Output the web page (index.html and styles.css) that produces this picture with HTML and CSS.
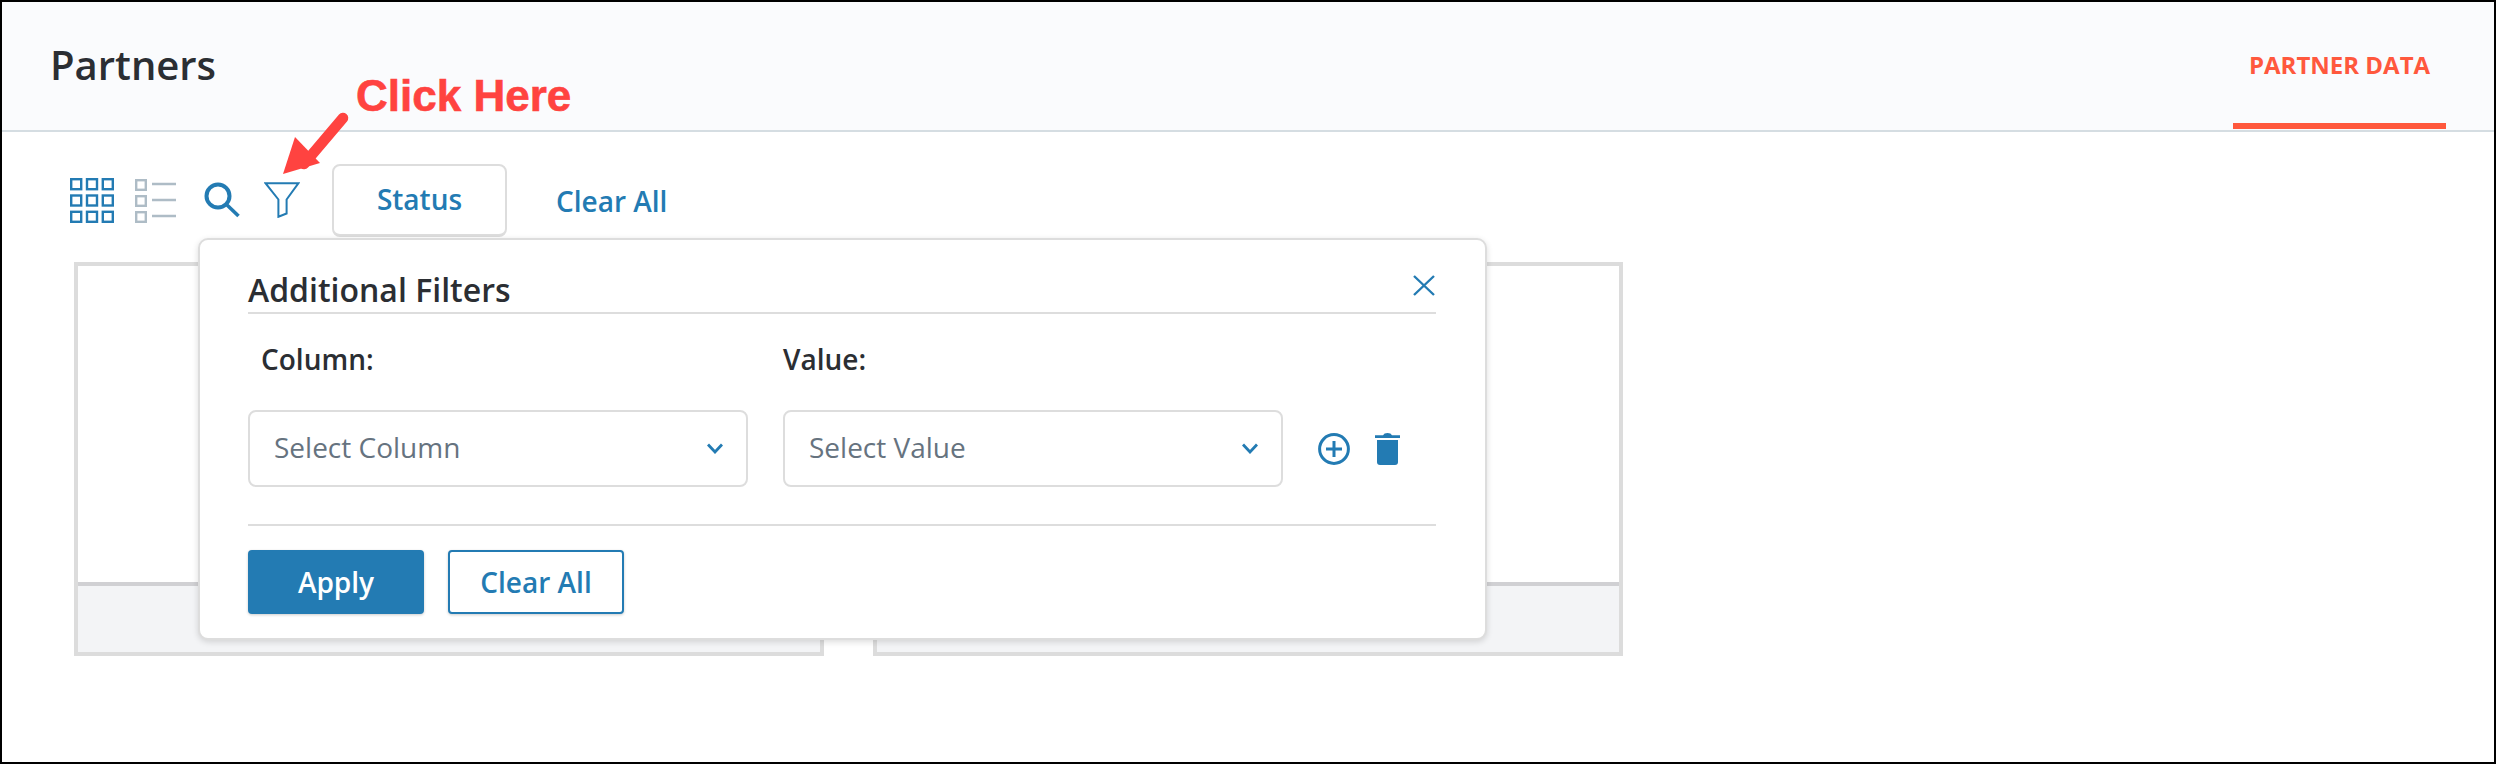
FILE: index.html
```html
<!DOCTYPE html>
<html lang="en">
<head>
<meta charset="utf-8">
<title>Partners</title>
<link rel="stylesheet" href="styles.css">
</head>
<body>
<div class="frame">
  <header class="topbar">
    <h1 class="page-title">Partners</h1>
    <nav class="tabs"><a class="tab">PARTNER DATA</a></nav>
  </header>
  <div class="toolbar">
    <svg class="icon-grid" width="44" height="45" viewBox="0 0 44 45" fill="none" stroke="#237bb3" stroke-width="2.4">
      <rect x="1.2" y="1.2" width="10" height="10"/><rect x="17" y="1.2" width="10" height="10"/><rect x="32.8" y="1.2" width="10" height="10"/>
      <rect x="1.2" y="17.5" width="10" height="10"/><rect x="17" y="17.5" width="10" height="10"/><rect x="32.8" y="17.5" width="10" height="10"/>
      <rect x="1.2" y="33.8" width="10" height="10"/><rect x="17" y="33.8" width="10" height="10"/><rect x="32.8" y="33.8" width="10" height="10"/>
    </svg>
    <svg class="icon-list" width="41" height="44" viewBox="0 0 41 44" fill="none" stroke="#aebcc6" stroke-width="2.4">
      <rect x="1.2" y="1.2" width="9.6" height="9.6"/><rect x="1.2" y="17.2" width="9.6" height="9.6"/><rect x="1.2" y="33.2" width="9.6" height="9.6"/>
      <path d="M17 5h24M17 21h24M17 37h24"/>
    </svg>
    <svg class="icon-search" width="36" height="36" viewBox="0 0 36 36" fill="none" stroke="#237bb3">
      <circle cx="14" cy="14" r="11.5" stroke-width="4"/>
      <path d="M22.5 22.5L34.5 34" stroke-width="3.6"/>
    </svg>
    <svg class="icon-funnel" width="36" height="36" viewBox="0 0 36 36" fill="none" stroke="#237bb3" stroke-width="2">
      <path d="M1.5 1.2H34.5L22.6 17.5V31.5L14.4 34.8V17.5Z"/>
    </svg>
    <button class="status-btn">Status</button>
    <a class="clear-link">Clear All</a>
  </div>
  <section class="cards">
    <div class="card"><div class="card-body"></div><div class="card-foot"></div></div>
    <div class="card"><div class="card-body"></div><div class="card-foot"></div></div>
  </section>

  <div class="annotation">
    <svg class="arrow" width="70" height="74" viewBox="0 0 70 74">
      <path d="M61 12L22 58" stroke="#ff4340" stroke-width="10.5" stroke-linecap="round"/>
      <path d="M1 68L13 31L38 57Z" fill="#ff4340"/>
    </svg>
    <span class="annotation-text">Click Here</span>
  </div>

  <div class="filter-panel">
    <div class="panel-head">
      <h2 class="panel-title">Additional Filters</h2>
      <svg class="icon-close" width="22" height="21" viewBox="0 0 22 21" fill="none" stroke="#237bb3" stroke-width="2.4"><path d="M1 1L21 20M21 1L1 20"/></svg>
    </div>
    <div class="filter-labels">
      <label class="filter-label col-a">Column:</label>
      <label class="filter-label col-b">Value:</label>
    </div>
    <div class="filter-row">
      <div class="select"><span class="select-text">Select Column</span>
        <svg width="16" height="11" viewBox="0 0 16 11" fill="none" stroke="#237bb3" stroke-width="2.8"><path d="M1 1.5L8 9L15 1.5"/></svg>
      </div>
      <div class="select"><span class="select-text">Select Value</span>
        <svg width="16" height="11" viewBox="0 0 16 11" fill="none" stroke="#237bb3" stroke-width="2.8"><path d="M1 1.5L8 9L15 1.5"/></svg>
      </div>
      <svg class="icon-plus" width="32" height="32" viewBox="0 0 32 32" fill="none" stroke="#237bb3" stroke-width="3">
        <circle cx="16" cy="16" r="14.4"/><path d="M8 16H24M16 8V24"/>
      </svg>
      <svg class="icon-trash" width="25" height="32" viewBox="0 0 25 32" fill="#237bb3">
        <path d="M0 2.2H8Q9 0 12.5 0T17 2.2H25V5H0Z"/>
        <path d="M2 7H23V29Q23 32 20 32H5Q2 32 2 29Z"/>
      </svg>
    </div>
    <div class="panel-actions">
      <button class="btn-apply">Apply</button>
      <button class="btn-clear">Clear All</button>
    </div>
  </div>
</div>
</body>
</html>
```
FILE: styles.css
```css
* { box-sizing: border-box; }
html, body { margin: 0; padding: 0; }
body { font-family: "Open Sans", "Liberation Sans", sans-serif; background: #fff; color: #2b2e33; }
.frame { position: relative; width: 2496px; height: 764px; border: 2px solid #000; background: #fff; overflow: hidden; }

.topbar { height: 130px; display: flex; align-items: stretch; justify-content: space-between; background: #fafbfd; border-bottom: 2px solid #d5dde2; padding: 0 48px 0 48px; }
.page-title { margin: 0; font-size: 40px; font-weight: 600; line-height: 50px; padding-top: 38px; color: #2b2e33; }
.tabs { display: flex; align-items: flex-end; padding-bottom: 1px; }
.tab { display: block; width: 213px; height: 121px; padding-top: 43px; border-bottom: 6px solid #ff583d; color: #ff583d; font-size: 24px; font-weight: 700; line-height: 28px; text-align: center; }

.toolbar { display: flex; align-items: center; height: 73px; margin-top: 32px; padding-left: 68px; }
.icon-list { margin-left: 21px; }
.icon-search { margin-left: 28px; margin-bottom: 2px; }
.icon-funnel { margin-left: 24px; margin-bottom: 2px; }
.status-btn { margin-left: 32px; width: 175px; height: 73px; background: #fff; border: 2px solid #ddd; border-bottom-width: 3px; border-radius: 8px; color: #237bb3; font: 600 28px "Open Sans", sans-serif; padding: 0 0 2px; }
.clear-link { margin-left: 49px; color: #237bb3; font-size: 28px; font-weight: 600; line-height: 32px; }

.cards { display: flex; gap: 49px; margin-top: 25px; padding-left: 72px; }
.card { width: 750px; height: 394px; border: 4px solid #dcdcdc; display: flex; flex-direction: column; }
.card-body { flex: 1; background: #fff; }
.card-foot { height: 70px; background: #f3f4f6; border-top: 4px solid #d0d0d3; }

.annotation { position: absolute; left: 280px; top: 74px; width: 300px; height: 110px; }
.arrow { position: absolute; left: 0; top: 30px; }
.annotation-text { position: absolute; left: 74px; top: -5px; font-family: "Liberation Sans", Arial, sans-serif; font-weight: 700; font-size: 44px; line-height: 50px; color: #ff4340; white-space: nowrap; -webkit-text-stroke: .6px #ff4340; }

.filter-panel { position: absolute; left: 196px; top: 236px; width: 1289px; height: 402px; padding: 0 49px 0 48px; background: #fff; border: 2px solid #ddd; border-radius: 10px; box-shadow: 0 2px 6px rgba(0, 0, 0, .14); }
.panel-head { display: flex; align-items: center; justify-content: space-between; height: 74px; padding-top: 28px; border-bottom: 2px solid #ddd; }
.panel-title { margin: 0; font-size: 32px; font-weight: 600; line-height: 36px; color: #2b2e33; }
.icon-close { margin-right: 1px; margin-top: -10px; }
.filter-labels { display: flex; height: 96px; padding-top: 29px; }
.filter-label { font-size: 28px; font-weight: 600; line-height: 32px; color: #2b2e33; }
.col-a { width: 535px; padding-left: 13px; }
.filter-row { display: flex; align-items: center; height: 77px; }
.select { display: flex; align-items: center; justify-content: space-between; width: 500px; height: 77px; padding: 0 23px 0 24px; border: 2px solid #ddd; border-radius: 8px; color: #66737f; font-size: 28px; }
.select-text { margin-top: -4px; }
.select + .select { margin-left: 35px; }
.icon-plus { margin-left: 35px; }
.icon-trash { margin-left: 25px; }
.panel-actions { display: flex; gap: 24px; margin-top: 37px; padding-top: 24px; border-top: 2px solid #ddd; }
.btn-apply, .btn-clear { width: 176px; height: 64px; border-radius: 4px; font: 600 28px "Open Sans", sans-serif; box-shadow: 0 1px 3px rgba(0, 0, 0, .2); }
.btn-apply { background: #237bb3; border: 0; color: #fff; }
.btn-clear { background: #fff; border: 2px solid #237bb3; color: #237bb3; }
```
